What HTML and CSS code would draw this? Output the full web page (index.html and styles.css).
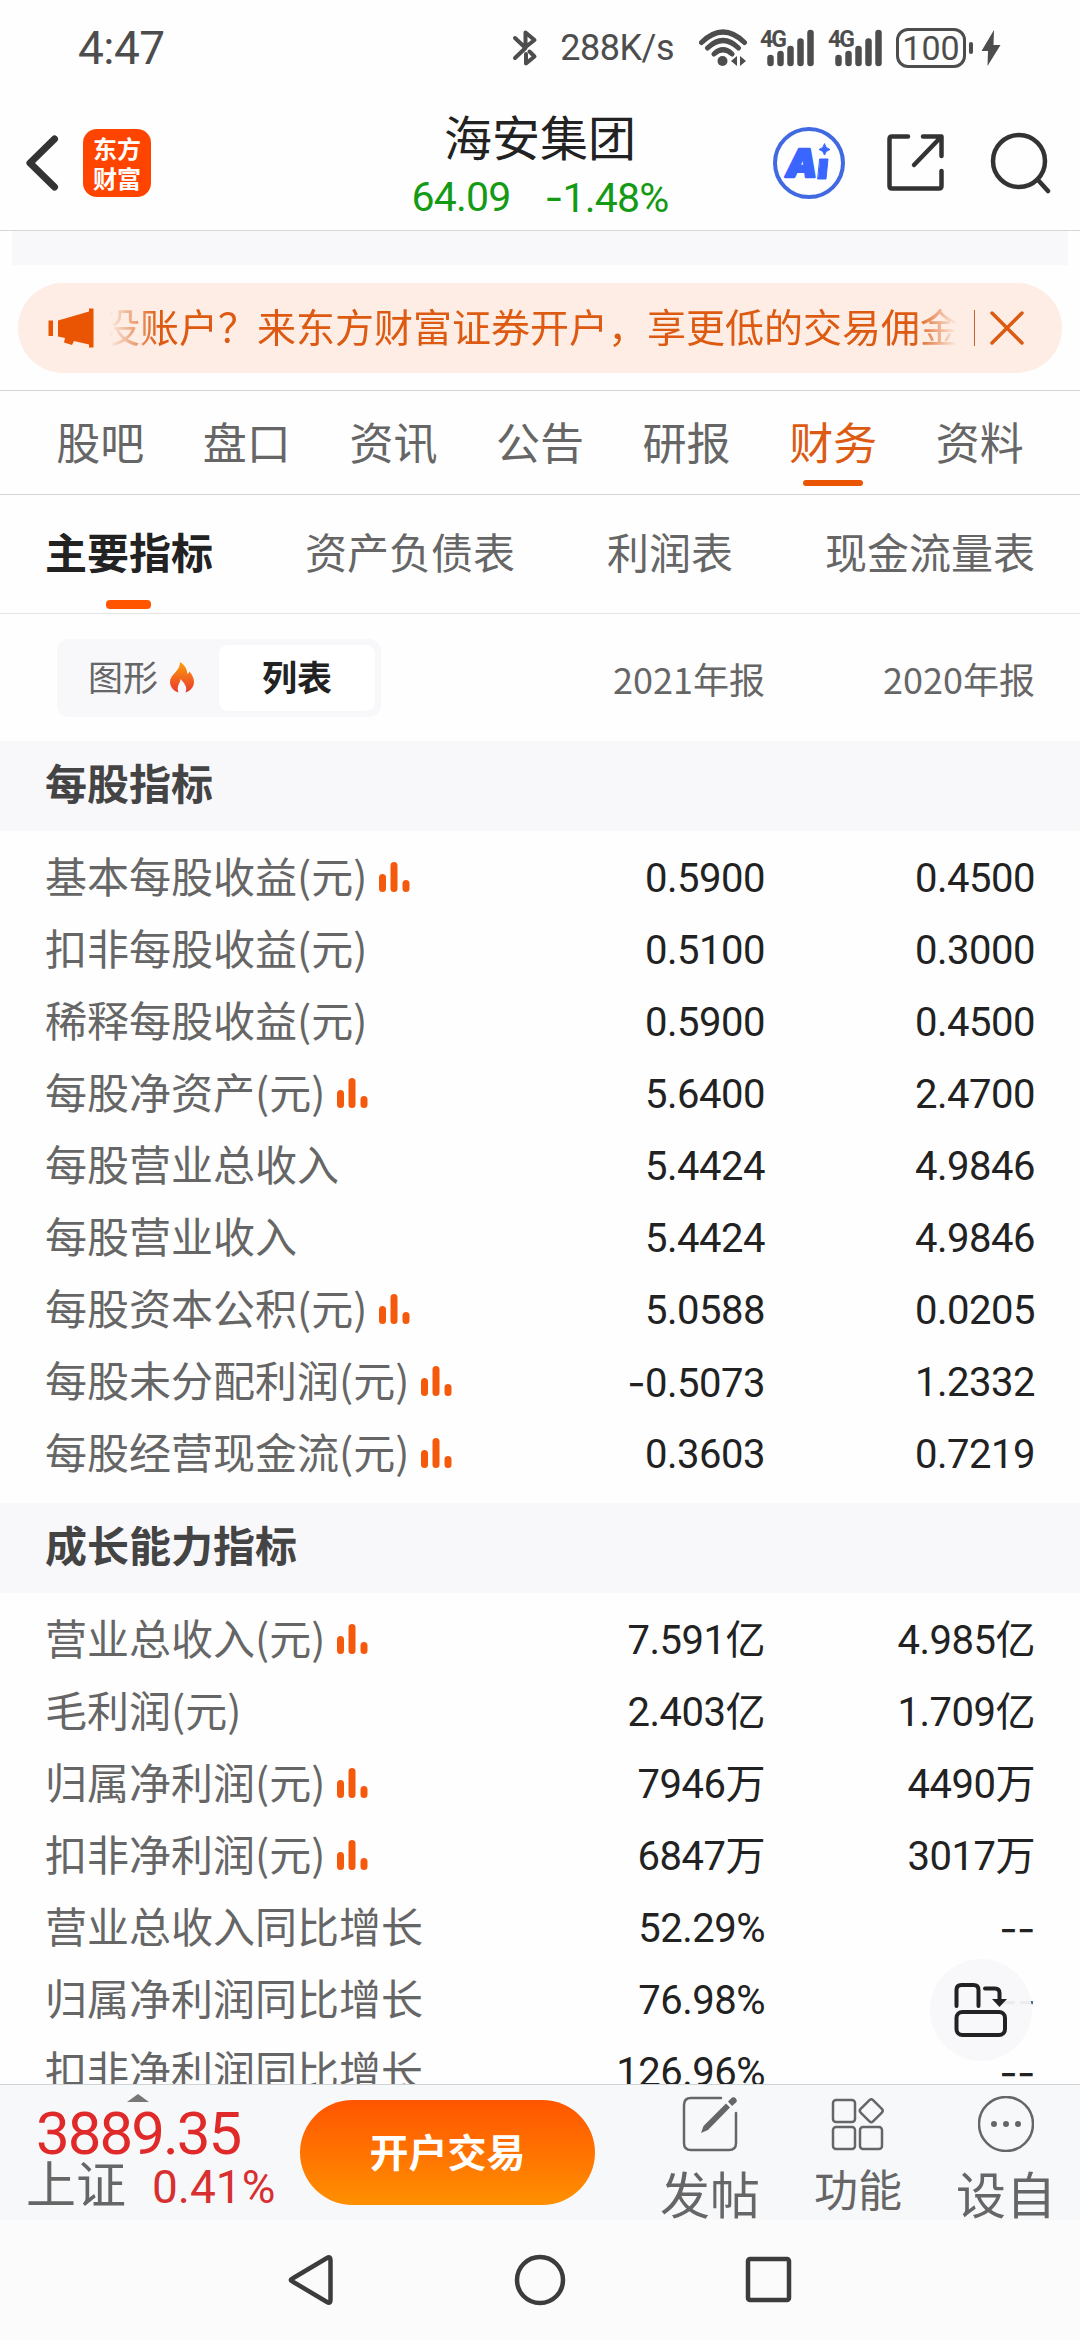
FILE: index.html
```html
<!DOCTYPE html>
<html lang="zh-CN">
<head>
    <meta charset="UTF-8">
    <title>海安集团 - 财务</title>
    <link rel="stylesheet" href="styles.css">
</head>
<body>
    <div class="status-bar">
        <span class="time">4:47</span>
        <svg class="bluetooth" width="26" height="38" viewBox="0 0 26 38">
            <path d="M3 9 L13 18.500 L22.500 11 L13.500 3.500 V17 M3 29 L13.500 19 M14 25 V34.500 L22.500 27.500 L17.500 22.500" />
        </svg>
        <span class="speed">288K/s</span>
        <svg class="wifi" width="48" height="38" viewBox="0 0 48 38">
            <path d="M2.500 13.500 Q24 -7.500 45.500 13.500 M8.500 19 Q24 4 39.500 19 M15 25 Q24 16.500 33 25" />
            <circle cx="23.500" cy="32" r="5" />
            <path class="fill" d="M38 27 V37 L32 32 Z M41 27 V37 L47 32 Z" />
        </svg>
        <div class="signal">
            <span>4G</span>
            <svg width="54" height="38" viewBox="0 0 54 38">
                <path d="M10.500 29 V34 M20.500 25 V34 M30.500 20 V34 M40.500 12.500 V34 M50.500 4 V34" />
            </svg>
        </div>
        <div class="signal">
            <span>4G</span>
            <svg width="54" height="38" viewBox="0 0 54 38">
                <path d="M10.500 29 V34 M20.500 25 V34 M30.500 20 V34 M40.500 12.500 V34 M50.500 4 V34" />
            </svg>
        </div>
        <span class="battery">100</span>
        <span class="battery-tip"></span>
        <svg class="bolt" width="20" height="38" viewBox="0 0 20 38">
            <path d="M13 1 L0.500 22 H7 L6.500 37 L19.500 16 H12.500 Z" />
        </svg>
    </div>

    <div class="header">
        <div class="header-left">
            <svg width="34" height="58" viewBox="0 0 34 58">
                <path d="M29.500 5 L5 29 L29.500 53" />
            </svg>
            <div class="logo"><span>东方</span><span>财富</span></div>
        </div>
        <div class="stock">
            <div class="stock-name">海安集团</div>
            <div class="stock-price"><span>64.09</span><span><span class="minus">-</span>1.48%</span></div>
        </div>
        <div class="header-right">
            <svg class="ai" width="72" height="72" viewBox="0 0 72 72">
                <circle cx="36" cy="36" r="34" />
                <text x="13" y="49.500">A</text>
                <path d="M47 32 H55 L53 52 H45 Z M51.500 17 Q52.500 21.500 57 22.500 Q52.500 23.500 51.500 28 Q50.500 23.500 46 22.500 Q50.500 21.500 51.500 17 Z" />
            </svg>
            <svg class="share" width="60" height="60" viewBox="0 0 60 60">
                <path d="M22 3.500 H6 Q3.500 3.500 3.500 6 V53 Q3.500 55.500 6 55.500 H53 Q55.500 55.500 55.500 53 V38 M37 3.500 H55.500 V23 M55 4 L28 32" />
            </svg>
            <svg class="search" width="62" height="62" viewBox="0 0 62 62">
                <circle cx="29" cy="29" r="26" />
                <path d="M48 48 L58 59" />
            </svg>
        </div>
    </div>

    <div class="band"></div>

    <div class="notice">
        <svg class="horn" width="46" height="40" viewBox="0 0 46 40">
            <path d="M0.500 12.500 H5 V28 H0.500 Z M10 12.500 L41 3.500 V0.500 H45.500 V39.500 H41 V36.500 L26 33 L24 37 L16 34.500 L17 30 L10 28.500 Z" />
        </svg>
        <div class="notice-text">没账户？来东方财富证券开户，享更低的交易佣金</div>
        <span class="notice-line"></span>
        <svg class="close" width="34" height="34" viewBox="0 0 34 34">
            <path d="M2 2 L32 32 M32 2 L2 32" />
        </svg>
    </div>

    <div class="tabs">
        <span>股吧</span>
        <span>盘口</span>
        <span>资讯</span>
        <span>公告</span>
        <span>研报</span>
        <span class="active">财务</span>
        <span>资料</span>
    </div>

    <div class="sub-tabs">
        <span class="active">主要指标</span>
        <span>资产负债表</span>
        <span>利润表</span>
        <span>现金流量表</span>
    </div>

    <div class="table-head">
        <div class="toggle">
            <span class="chart-mode">图形
                <svg width="24" height="31" viewBox="0 0 24 31">
                    <defs>
                        <linearGradient id="flame" x1="0" y1="0" x2="0" y2="1">
                            <stop offset="0" stop-color="#ff9d0a" />
                            <stop offset="1" stop-color="#e8382f" />
                        </linearGradient>
                    </defs>
                    <path fill="url(#flame)" d="M10 0 C16 4 17 8 17.500 12 C18.500 11.500 19 10.500 19.500 9.500 C22 12.500 24 16 24 20 C24 25 20.500 29 15.500 30.500 C18 25 14 21 10.500 17 C10.500 21 6 24 8.500 30.500 C3.500 29 0 25 0 20 C0 12 10 10 10 0 Z" />
                </svg>
            </span>
            <span class="list-mode">列表</span>
        </div>
        <span>2021年报</span>
        <span>2020年报</span>
    </div>

    <div class="content" id="content"></div>

    <div class="rotate-btn">
        <svg width="54" height="56" viewBox="0 0 54 56">
            <path d="M2.500 24 V8 Q2.500 3 7.500 3 H19.500 Q24.500 3 24.500 8 V24 M31 6.500 H41 Q45.500 6.500 45.500 11 V20" />
            <rect x="2.500" y="30" width="48.500" height="23" rx="6" />
            <path class="arrow" d="M38 17 H53 L45.500 25 Z" />
        </svg>
    </div>

    <div class="bottom-bar">
        <div class="index">
            <svg width="22" height="8" viewBox="0 0 22 8"><path d="M0 8 L11 0 L22 8 Z" /></svg>
            <div class="index-value">3889.35</div>
            <div class="index-row"><span>上证</span><span class="index-change">0.41%</span></div>
        </div>
        <div class="trade-btn">开户交易</div>
        <div class="actions">
            <div class="action big">
                <svg width="56" height="56" viewBox="0 0 56 56">
                    <path d="M39 2 H9 Q2 2 2 9 V47 Q2 54 9 54 H47 Q54 54 54 47 V17" />
                    <path class="pen" d="M19 37 L21.500 30 L44 7.500 L48 11.500 L26 34 Z M46 5.500 L50 1.500 Q52 0.500 54 2.500 Q55.500 4.500 54 6.500 L50 10 Z" />
                </svg>
                <span>发帖</span>
            </div>
            <div class="action">
                <svg width="56" height="56" viewBox="0 0 56 56">
                    <rect x="3" y="4" width="22" height="22" rx="3" />
                    <rect x="3" y="31" width="22" height="22" rx="3" />
                    <rect x="30" y="31" width="22" height="22" rx="3" />
                    <rect x="32.500" y="6" width="17.500" height="17.500" rx="2.500" transform="rotate(45 41.250 14.750)" />
                </svg>
                <span>功能</span>
            </div>
            <div class="action big">
                <svg width="56" height="56" viewBox="0 0 56 56">
                    <circle cx="28" cy="28" r="27" />
                    <path class="pen" d="M13 28 a3 3 0 1 0 6 0 a3 3 0 1 0 -6 0 M25 28 a3 3 0 1 0 6 0 a3 3 0 1 0 -6 0 M37 28 a3 3 0 1 0 6 0 a3 3 0 1 0 -6 0" />
                </svg>
                <span>设自</span>
            </div>
        </div>
    </div>

    <div class="nav-bar">
        <svg width="52" height="52" viewBox="0 0 52 52"><path d="M7.500 24.500 L42 4 Q45.500 2 45.500 6 V46 Q45.500 50 42 48 L7.500 27.500 Q4 26 7.500 24.500 Z" /></svg>
        <svg width="52" height="52" viewBox="0 0 52 52"><circle cx="26" cy="26" r="23" /></svg>
        <svg width="52" height="52" viewBox="0 0 52 52"><rect x="5" y="5" width="41" height="41" rx="2" /></svg>
    </div>

    <script>
        const sections = [
            {
                title: "每股指标",
                rows: [
                    ["基本每股收益(元)", "0.5900", "0.4500", true],
                    ["扣非每股收益(元)", "0.5100", "0.3000"],
                    ["稀释每股收益(元)", "0.5900", "0.4500"],
                    ["每股净资产(元)", "5.6400", "2.4700", true],
                    ["每股营业总收入", "5.4424", "4.9846"],
                    ["每股营业收入", "5.4424", "4.9846"],
                    ["每股资本公积(元)", "5.0588", "0.0205", true],
                    ["每股未分配利润(元)", "-0.5073", "1.2332", true],
                    ["每股经营现金流(元)", "0.3603", "0.7219", true]
                ]
            },
            {
                title: "成长能力指标",
                rows: [
                    ["营业总收入(元)", "7.591亿", "4.985亿", true],
                    ["毛利润(元)", "2.403亿", "1.709亿"],
                    ["归属净利润(元)", "7946万", "4490万", true],
                    ["扣非净利润(元)", "6847万", "3017万", true],
                    ["营业总收入同比增长", "52.29%", "--"],
                    ["归属净利润同比增长", "76.98%", "--"],
                    ["扣非净利润同比增长", "126.96%", "--"]
                ]
            }
        ];

        const barsIcon = `<svg width="31" height="30" viewBox="0 0 31 30"><path d="M3.500 15.500 V26.500 M15 3.500 V26.500 M27 21.500 V26.500" /></svg>`;

        function valueCell(value) {
            return `<span class="value">${value.replace(/-+/, '<span class="minus">$&</span>')}</span>`;
        }

        function renderSections() {
            let html = "";
            sections.forEach(section => {
                html += `<div class="section-title">${section.title}</div><div class="rows">`;
                section.rows.forEach(row => {
                    html += `<div class="row"><span class="label">${row[0]}${row[3] ? barsIcon : ""}</span>${valueCell(row[1])}${valueCell(row[2])}</div>`;
                });
                html += `</div>`;
            });
            document.getElementById("content").innerHTML = html;
        }

        renderSections();
    </script>
</body>
</html>
```
FILE: styles.css
```css
* {
    box-sizing: border-box;
}
body {
    margin: 0;
    width: 1080px;
    height: 2340px;
    overflow: hidden;
    display: flex;
    flex-direction: column;
    position: relative;
    background: #fefefe;
    color: #222;
    font-family: "Noto Sans CJK SC", sans-serif;
}
body > div {
    flex-shrink: 0;
}
svg {
    display: block;
    flex-shrink: 0;
    fill: none;
    stroke-linecap: round;
    stroke-linejoin: round;
}

/* Phone status bar */
.status-bar {
    height: 96px;
    display: flex;
    align-items: center;
    padding: 0 79px 0 78px;
    color: #4d4d4d;
    font-family: Roboto, sans-serif;
}
.status-bar svg {
    stroke: #4d4d4d;
}
.time {
    font-size: 46px;
    letter-spacing: -0.5px;
    margin-right: auto;
}
.bluetooth {
    stroke-width: 4;
}
.speed {
    font-size: 36px;
    letter-spacing: -0.5px;
    margin-left: 22px;
    margin-right: 25px;
}
.wifi {
    stroke-width: 5;
    margin-right: 13px;
}
.wifi circle,
.wifi .fill {
    fill: #4d4d4d;
    stroke: none;
}
.signal {
    position: relative;
    margin-right: 14px;
}
.signal svg {
    stroke-width: 6.5;
}
.signal span {
    position: absolute;
    left: 0;
    top: -1px;
    font-size: 23px;
    line-height: 23px;
    font-weight: bold;
    letter-spacing: -2px;
}
.battery {
    width: 70px;
    height: 40px;
    border: 3px solid #4d4d4d;
    border-radius: 12px;
    font-size: 34px;
    line-height: 35px;
    text-align: center;
}
.battery-tip {
    width: 4px;
    height: 12px;
    margin: 0 8px 0 3px;
    border-radius: 2px;
    background: #4d4d4d;
}
.bolt path {
    fill: #4d4d4d;
    stroke: none;
}

/* Header */
.header {
    height: 135px;
    display: grid;
    grid-template-columns: 380px 320px 380px;
    border-bottom: 1px solid #d5d7da;
}
.header-left {
    display: flex;
    align-items: center;
    padding-left: 25px;
}
.header-left svg {
    stroke: #333;
    stroke-width: 7;
}
.logo {
    width: 68px;
    height: 68px;
    margin-left: 24px;
    border-radius: 14px;
    background: #ff4400;
    color: #fff;
    display: flex;
    flex-direction: column;
    justify-content: center;
    text-align: center;
    font-size: 24px;
    line-height: 30px;
    font-weight: bold;
}
.stock {
    text-align: center;
}
.stock-name {
    font-size: 48px;
    line-height: 60px;
    margin-top: 9px;
}
.stock-price {
    display: flex;
    justify-content: center;
    gap: 34px;
    font-family: Roboto, sans-serif;
    font-size: 41px;
    line-height: 48px;
    letter-spacing: -0.8px;
    margin-top: 8px;
    color: #149a14;
}
.minus {
    font-family: Inter, sans-serif;
}
.header-right {
    display: flex;
    align-items: center;
    padding-left: 73px;
}
.ai circle {
    stroke: #4169e1;
    stroke-width: 4;
}
.ai text {
    font-family: Inter, sans-serif;
    font-size: 39px;
    font-weight: 900;
    font-style: italic;
    fill: #3a66ff;
    stroke: #3a66ff;
    stroke-width: 2.5;
}
.ai path {
    fill: #3a66ff;
    stroke: #3a66ff;
    stroke-width: 1;
}
.share {
    stroke: #333;
    stroke-width: 4.5;
    margin-left: 41px;
}
.search {
    stroke: #333;
    stroke-width: 4.5;
    margin-left: 44px;
}

.band {
    height: 34px;
    margin: 0 12px;
    background: #f8f8fb;
}

/* Account notice */
.notice {
    height: 90px;
    margin: 18px 18px 17px;
    padding-left: 30px;
    border-radius: 45px;
    background: #fdede4;
    display: flex;
    align-items: center;
}
.horn {
    fill: #ea5504;
    margin-right: 15px;
}
.notice-text {
    width: 848px;
    overflow: hidden;
    white-space: nowrap;
    text-indent: -8px;
    font-size: 39px;
    line-height: 58px;
    margin-bottom: 7px;
    color: #dd5a12;
    -webkit-mask-image: linear-gradient(to right, transparent, #000 50px, #000 805px, transparent);
    mask-image: linear-gradient(to right, transparent, #000 50px, #000 805px, transparent);
}
.notice-line {
    width: 1px;
    height: 36px;
    margin: 0 15px 0 17px;
    background: #c4622c;
}
.close {
    stroke: #dd5a12;
    stroke-width: 3.5;
}

/* Tabs */
.tabs {
    height: 105px;
    padding: 0 27px;
    display: grid;
    grid-template-columns: repeat(7, 1fr);
    border-top: 1px solid #d5d5d5;
    border-bottom: 1px solid #d5d5d5;
    font-size: 44px;
    line-height: 100px;
    text-align: center;
    color: #666;
}
.tabs span,
.sub-tabs span {
    position: relative;
}
.tabs .active {
    color: #dd5a12;
}
.tabs .active::after {
    content: '';
    position: absolute;
    left: 50%;
    bottom: 8px;
    width: 60px;
    height: 6px;
    margin-left: -30px;
    border-radius: 3px;
    background: #ea5504;
}
.sub-tabs {
    height: 119px;
    padding: 0 45px;
    display: flex;
    justify-content: space-between;
    border-bottom: 1px solid #e4e4e4;
    font-size: 42px;
    line-height: 111px;
    color: #666;
}
.sub-tabs .active {
    font-weight: bold;
    color: #222;
}
.sub-tabs .active::after {
    content: '';
    position: absolute;
    left: 50%;
    bottom: 4px;
    width: 45px;
    height: 9px;
    margin-left: -23px;
    border-radius: 4px;
    background: #ff5500;
}

/* Table */
.table-head {
    height: 127px;
    padding: 0 45px;
    display: grid;
    grid-template-columns: 450px 270px 270px;
    align-items: center;
    text-align: right;
    font-size: 36px;
    color: #666;
}
.toggle {
    width: 324px;
    height: 78px;
    margin-left: 12px;
    padding: 6px;
    border-radius: 12px;
    background: #f8f8fb;
    display: flex;
    font-size: 35px;
    line-height: 62px;
}
.chart-mode {
    width: 156px;
    height: 62px;
    padding-left: 25px;
    display: flex;
    align-items: center;
    gap: 12px;
}
.chart-mode svg {
    margin-top: 4px;
}
.list-mode {
    width: 156px;
    height: 66px;
    border-radius: 9px;
    background: #fff;
    text-align: center;
    font-weight: bold;
    color: #222;
}
.content {
    height: 1343px;
    overflow: hidden;
}
.section-title {
    height: 90px;
    padding-left: 45px;
    background: #f8f8fb;
    font-size: 42px;
    line-height: 81px;
    font-weight: bold;
    color: #444;
}
.rows {
    padding: 12px 0;
}
.row {
    height: 72px;
    padding: 0 45px;
    display: grid;
    grid-template-columns: 450px 270px 270px;
    line-height: 64px;
}
.label {
    display: flex;
    font-size: 42px;
    color: #666;
    white-space: nowrap;
}
.label svg {
    margin: 19px 0 0 12px;
    stroke: #f55a0c;
    stroke-width: 7;
}
.value {
    font-family: Roboto, "Noto Sans CJK SC", sans-serif;
    font-size: 40px;
    line-height: 72px;
    letter-spacing: -0.5px;
    text-align: right;
}

.rotate-btn {
    position: absolute;
    left: 930px;
    top: 1959px;
    width: 102px;
    height: 102px;
    border-radius: 50%;
    background: rgba(248, 248, 251, 0.95);
    display: flex;
    align-items: center;
    justify-content: center;
}
.rotate-btn svg {
    stroke: #222;
    stroke-width: 4;
}
.rotate-btn .arrow {
    fill: #222;
    stroke: none;
}

/* Bottom bar */
.bottom-bar {
    height: 136px;
    display: flex;
    border-top: 1px solid #d0d3d6;
    background: #f7f8fa;
    overflow: hidden;
}
.index {
    width: 300px;
    padding-top: 9px;
    white-space: nowrap;
}
.index svg {
    margin-left: 127px;
    fill: #777;
}
.index-value {
    font-family: Roboto, sans-serif;
    font-size: 60px;
    line-height: 64px;
    letter-spacing: -2px;
    margin-left: 36px;
    color: #e02a2a;
}
.index-row {
    display: flex;
    margin-left: 26px;
    font-size: 50px;
    line-height: 30px;
    color: #666;
}
.index-change {
    font-family: Roboto, sans-serif;
    font-size: 46px;
    line-height: 42px;
    margin-left: 26px;
    color: #d83030;
}
.trade-btn {
    width: 295px;
    height: 105px;
    margin-top: 15px;
    border-radius: 53px;
    background: linear-gradient(#ff5500, #ff9000);
    color: #fff;
    text-align: center;
    font-size: 39px;
    line-height: 101px;
    font-weight: bold;
}
.actions {
    display: flex;
    margin-left: 41px;
}
.action {
    width: 148px;
    padding-top: 11px;
    display: flex;
    flex-direction: column;
    align-items: center;
    font-size: 44px;
    line-height: 73px;
    color: #666;
}
.action.big {
    font-size: 50px;
    line-height: 80px;
}
.action svg {
    stroke: #666;
    stroke-width: 2.5;
}
.action .pen {
    fill: #666;
    stroke: none;
}

.nav-bar {
    height: 120px;
    display: flex;
    justify-content: center;
    align-items: center;
    gap: 177px;
    background: #fbfbfb;
}
.nav-bar svg {
    stroke: #3c3c3c;
    stroke-width: 4.5;
}
```
